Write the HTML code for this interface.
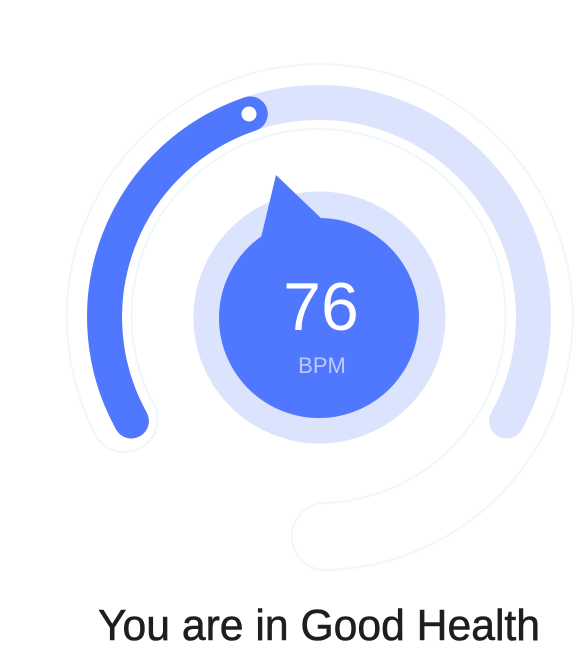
<!DOCTYPE html>
<html><head><meta charset="utf-8"><style>
html,body{margin:0;padding:0;background:#fff;width:582px;height:661px;overflow:hidden}
svg{display:block}
</style></head><body>
<svg width="582" height="661" viewBox="0 0 582 661" xmlns="http://www.w3.org/2000/svg">
  <!-- faint outline -->
  <path d="M 98 439 A 253 253 0 1 1 328 570 A 33 33 0 0 1 323 503 A 187 187 0 1 0 151 399 A 30 30 0 0 1 98 439 Z" fill="none" stroke="#eef8fb" stroke-width="2"/>
  <!-- light track -->
  <path d="M 131.4 421 A 214.5 214.5 0 1 1 506.6 421" fill="none" stroke="#dce3fd" stroke-width="35" stroke-linecap="round"/>
  <!-- blue progress -->
  <path d="M 131.4 421 A 214.5 214.5 0 0 1 250.3 113.9" fill="none" stroke="#5078fe" stroke-width="35" stroke-linecap="round"/>
  <circle cx="249" cy="114" r="7.5" fill="#fff"/>
  <!-- inner circles -->
  <circle cx="319.5" cy="317.5" r="126" fill="#dce3fd"/>
  <circle cx="319" cy="318" r="100" fill="#5078fe"/>
  <polygon points="276,175 260,242 325,222" fill="#5078fe"/>
  <text x="321" y="330" text-anchor="middle" font-family="Liberation Sans, sans-serif" font-size="68" fill="#fff">76</text>
  <text x="322" y="373" text-anchor="middle" font-family="Liberation Sans, sans-serif" font-size="22" fill="#bccafd">BPM</text>
  <text x="98" y="640" font-family="Liberation Sans, sans-serif" font-size="44" fill="#1e1e1e" stroke="#1e1e1e" stroke-width="0.6" textLength="442" lengthAdjust="spacingAndGlyphs">You are in Good Health</text>
</svg>
</body></html>
